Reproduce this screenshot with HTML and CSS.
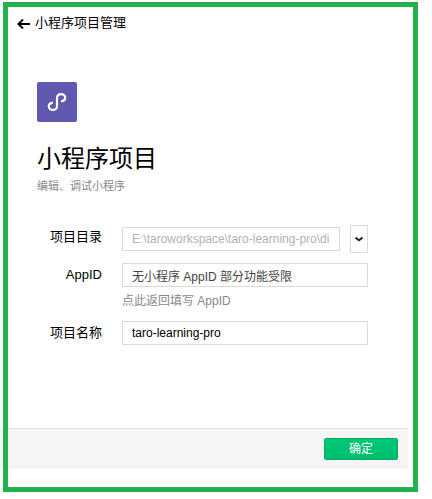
FILE: index.html
```html
<!DOCTYPE html>
<html lang="zh-CN">
<head>
<meta charset="utf-8">
<meta name="viewport" content="width=device-width, initial-scale=1">
<title>小程序项目管理</title>
<link rel="stylesheet" href="styles.css">
</head>
<body>
<form class="window">
  <header class="topbar">
    <a class="back" href="#">
      <svg class="back-icon" viewBox="0 0 14 12" aria-hidden="true"><path d="M14 7H3M7 2.500L2.500 7l4.500 4.500"/></svg>
      <span>小程序项目管理</span>
    </a>
  </header>
  <main class="content">
    <div class="logo">
      <svg class="logo-icon" viewBox="0 0 40 40" aria-hidden="true"><path d="M25 19.200c1.900-.4 3.200-1.700 3.200-3.400 0-2.100-1.800-3.700-4.100-3.700s-4.100 1.600-4.100 3.700v8.400c0 2.100-1.800 3.700-4.100 3.700s-4.100-1.600-4.100-3.700c0-1.700 1.300-3 3.200-3.400"/></svg>
    </div>
    <h1 class="title">小程序项目</h1>
    <p class="subtitle">编辑、调试小程序</p>
    <div class="fields">
      <label class="label" for="dir">项目目录</label>
      <div class="dir-row">
        <input class="input input-path" id="dir" type="text" value="E:\taroworkspace\taro-learning-pro\di" disabled>
        <div class="picker">
          <select class="picker-select" aria-label="项目目录"><option></option></select>
          <svg class="picker-icon" viewBox="0 0 8 6" aria-hidden="true"><path d="M.5 1.500L4 4.300l3.500-2.800"/></svg>
        </div>
      </div>
      <label class="label" for="appid">AppID</label>
      <div>
        <input class="input input-muted" id="appid" type="text" value="无小程序 AppID 部分功能受限" readonly>
        <a class="hint" href="#">点此返回填写 AppID</a>
      </div>
      <label class="label" for="name">项目名称</label>
      <input class="input" id="name" type="text" value="taro-learning-pro">
    </div>
  </main>
  <footer class="footer">
    <button class="confirm" type="button">确定</button>
  </footer>
</form>
<div class="highlight"></div>
</body>
</html>
```
FILE: styles.css
```css
* {
  box-sizing: border-box;
}

body {
  position: relative;
  margin: 0;
  padding-bottom: 30px;
  background: #fff;
  color: #000;
  font-family: "Liberation Sans", "Noto Sans CJK SC", sans-serif;
  font-size: 13px;
}

.window {
  margin-right: 24px;
}

.topbar {
  padding: 13px 16px 0;
}

.back {
  display: inline-flex;
  align-items: center;
  gap: 5px;
  height: 20px;
  color: #000;
  line-height: 20px;
  text-decoration: none;
}

.back-icon {
  width: 14px;
  height: 12px;
  fill: none;
  stroke: #000;
  stroke-width: 2;
}

.content {
  padding: 49px 40px 83px 37px;
}

.logo {
  width: 40px;
  height: 40px;
  border-radius: 2px;
  background: #6159b0;
}

.logo-icon {
  display: block;
  width: 40px;
  height: 40px;
  fill: none;
  stroke: #fff;
  stroke-width: 2.2;
  stroke-linecap: round;
}

.title {
  margin: 20px 0 0;
  font-size: 24px;
  font-weight: 400;
  line-height: 34px;
}

.subtitle {
  margin: 0;
  color: #888;
  font-size: 11px;
  line-height: 20px;
}

.fields {
  display: grid;
  grid-template-columns: 65px 1fr;
  column-gap: 20px;
  row-gap: 10px;
  margin-top: 29px;
}

.label {
  line-height: 24px;
  text-align: right;
}

.dir-row {
  display: flex;
  align-items: center;
  gap: 10px;
}

.input {
  display: block;
  width: 100%;
  height: 24px;
  padding: 0 9px;
  border: 1px solid #d9d9d9;
  border-radius: 0;
  background: #fff;
  color: #000;
  font: inherit;
  font-size: 12px;
  align-self: center;
}

.input-path {
  flex: 1;
  min-width: 0;
  color: #b2b2b2;
}

.input-muted {
  color: #444;
}

.picker {
  position: relative;
  width: 18px;
  height: 28px;
}

.picker-select {
  display: block;
  width: 100%;
  height: 100%;
  padding: 0;
  border: 1px solid #d9d9d9;
  border-radius: 0;
  background: #fff;
  appearance: none;
}

.picker-icon {
  position: absolute;
  inset: 0;
  width: 8px;
  height: 6px;
  margin: auto;
  fill: none;
  stroke: #222;
  stroke-width: 2;
  pointer-events: none;
}

.hint {
  display: block;
  margin-top: 4px;
  color: #888;
  font-size: 12px;
  line-height: 20px;
  text-decoration: none;
}

.footer {
  display: flex;
  justify-content: flex-end;
  padding: 9px 10px;
  border-top: 1px solid #e2e2e2;
  background: #f5f5f5;
}

.confirm {
  width: 74px;
  height: 22px;
  padding: 0;
  border: 1px solid #00ad63;
  border-radius: 2px;
  background: linear-gradient(#00c777, #00bd70);
  color: #fff;
  font: inherit;
  font-size: 12px;
  line-height: 20px;
}

.highlight {
  position: absolute;
  inset: 2px 14px 7px 3px;
  border: 5px solid #22b14c;
  pointer-events: none;
}
```
